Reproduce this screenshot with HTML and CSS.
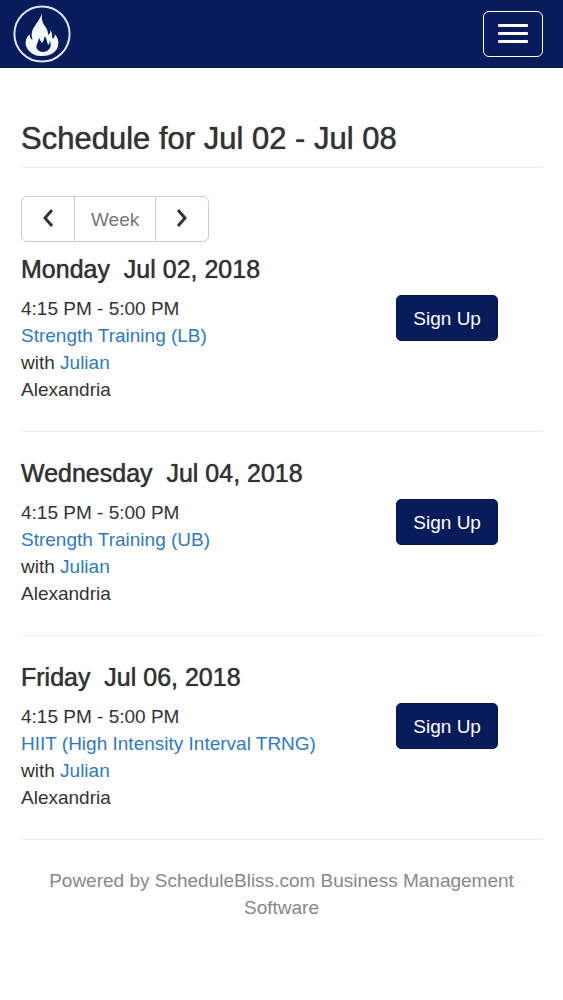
FILE: index.html
```html
<!DOCTYPE html>
<html lang="en">
<head>
  <meta charset="UTF-8">
  <meta name="viewport" content="width=device-width, initial-scale=1">
  <title>Schedule</title>
  <link rel="stylesheet" href="styles.css">
</head>
<body>

<header class="navbar">
  <a href="#" class="brand" aria-label="Home">
    <svg width="58" height="58" viewBox="0 0 58 58">
      <circle cx="29" cy="29" r="27.6" fill="none" stroke="#dce6fa" stroke-width="2"/>
      <path fill="#f4f9ff" d="M29 8C28.500 13 29 17 31 20C33.500 23 35 25 35 30C37 28.500 37.500 27 37.500 25C39.500 28 39 31 39.500 34C41.500 33 42 31 41.500 29C46 33 46.500 40 43.500 44.500C40 50 34 51 27 51C21 51 14.500 46 13 41C12 36 13.500 32 16.500 29.500C17 32 17.500 34 19.500 35C18.500 31 18 28 20 24C22.500 19 27 15 29 8Z"/>
      <path fill="#081c5c" d="M26 32C26.500 35 28 36 29 38C30.500 36 31.500 34 31.500 31C34 34 34 37 35 40C36.500 39 37 37 36.500 35C39 40 37.500 44 34 46C30 48 26 47 24 44C22 40 26 37 26 32Z"/>
      <path fill="none" stroke="#f4f9ff" stroke-width="2" d="M24 49C31 50 34 48 38 44"/>
    </svg>
  </a>
  <button type="button" class="toggle" aria-label="Toggle navigation">
    <span class="bar"></span>
    <span class="bar"></span>
    <span class="bar"></span>
  </button>
</header>

<main class="container">
  <h1 class="page-header">Schedule for Jul 02 - Jul 08</h1>

  <div class="btn-group">
    <button type="button" class="btn-default" aria-label="Previous week">
      <svg width="12" height="20" viewBox="0 0 12 20"><path d="M10 1L3 9L10 17"/></svg>
    </button>
    <button type="button" class="btn-default" disabled>Week</button>
    <button type="button" class="btn-default" aria-label="Next week">
      <svg width="12" height="20" viewBox="0 0 12 20"><path d="M2 1L9 9L2 17"/></svg>
    </button>
  </div>

  <section class="day">
    <h2>Monday&nbsp; Jul 02, 2018</h2>
    <div class="row">
      <div class="col">
        4:15 PM - 5:00 PM<br>
        <a href="#">Strength Training (LB)</a><br>
        with <a href="#">Julian</a><br>
        Alexandria
      </div>
      <div class="col">
        <button type="button" class="btn-primary">Sign Up</button>
      </div>
    </div>
  </section>

  <section class="day">
    <h2>Wednesday&nbsp; Jul 04, 2018</h2>
    <div class="row">
      <div class="col">
        4:15 PM - 5:00 PM<br>
        <a href="#">Strength Training (UB)</a><br>
        with <a href="#">Julian</a><br>
        Alexandria
      </div>
      <div class="col">
        <button type="button" class="btn-primary">Sign Up</button>
      </div>
    </div>
  </section>

  <section class="day">
    <h2>Friday&nbsp; Jul 06, 2018</h2>
    <div class="row">
      <div class="col">
        4:15 PM - 5:00 PM<br>
        <a href="#">HIIT (High Intensity Interval TRNG)</a><br>
        with <a href="#">Julian</a><br>
        Alexandria
      </div>
      <div class="col">
        <button type="button" class="btn-primary">Sign Up</button>
      </div>
    </div>
  </section>

  <footer class="footer">Powered by ScheduleBliss.com Business Management Software</footer>
</main>

</body>
</html>
```
FILE: styles.css
```css
* {
  box-sizing: border-box;
}

body {
  margin: 0;
  font-family: "Helvetica Neue", "Liberation Sans", Arial, sans-serif;
  font-size: 19px;
  line-height: 27px;
  color: #333;
  background-color: #fff;
}

a {
  color: #337ab7;
  text-decoration: none;
}

button {
  font: inherit;
  cursor: pointer;
}

.navbar {
  display: flex;
  justify-content: space-between;
  align-items: center;
  height: 68px;
  padding: 0 20px 0 13px;
  background-color: #081c5c;
  border-bottom: 1px solid #06164c;
}

.brand svg {
  display: block;
}

.toggle {
  display: flex;
  flex-direction: column;
  justify-content: center;
  align-items: center;
  gap: 5px;
  width: 60px;
  height: 46px;
  padding: 0;
  background: none;
  border: 1px solid #fff;
  border-radius: 6px;
}

.bar {
  width: 30px;
  height: 3px;
  border-radius: 1px;
  background-color: #fff;
}

.container {
  padding: 54px 21px 0;
}

h1, h2 {
  font-weight: normal;
  /* thickens the regular face to a medium weight */
  text-shadow: 0 0 1px #333;
}

.page-header {
  margin: 0 0 28px;
  padding-bottom: 11px;
  font-size: 31px;
  line-height: 34px;
  border-bottom: 1px solid #eee;
}

.btn-group {
  display: flex;
}

.btn-default {
  height: 46px;
  padding: 0 16px;
  color: #333;
  background-color: #fff;
  border: 1px solid #ccc;
  margin-left: -1px;
}

.btn-default:first-child {
  margin-left: 0;
  padding: 0 20px;
  border-radius: 6px 0 0 6px;
}

.btn-default:last-child {
  padding: 0 20px;
  border-radius: 0 6px 6px 0;
}

.btn-default:disabled {
  color: #777;
}

.btn-default svg {
  display: block;
  fill: none;
  stroke: #333;
  stroke-width: 3;
}

.day {
  padding-bottom: 28px;
  border-bottom: 1px solid #eee;
}

.day h2 {
  margin: 28px 0 12px;
  font-size: 25px;
  line-height: 27px;
}

.btn-group + .day h2 {
  margin-top: 14px;
}

.row {
  display: grid;
  grid-template-columns: 2fr 1fr;
  margin: 0 -21px;
}

.col {
  padding: 0 21px;
}

.btn-primary {
  height: 46px;
  padding: 0 16px;
  color: #fff;
  background-color: #081c5c;
  border: 1px solid #06164c;
  border-radius: 5px;
}

.footer {
  margin-top: 27px;
  text-align: center;
  color: #888;
}
```
